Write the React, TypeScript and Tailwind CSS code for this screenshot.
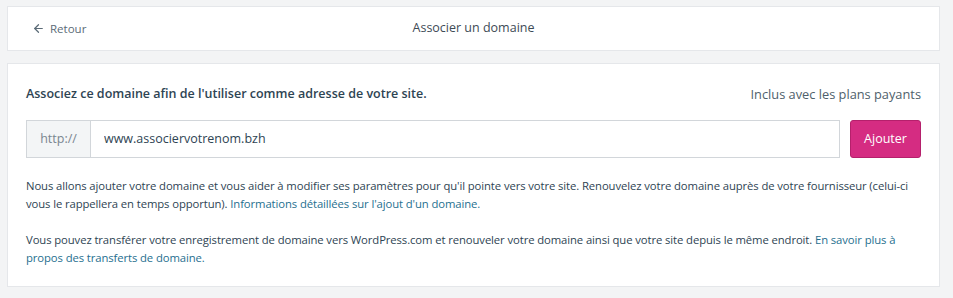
import { ArrowLeft } from "lucide-react"

export default function App() {
  return (
    <div
      className="min-h-[298px] w-[953px] bg-[#f3f4f5] px-[7px] pt-[6px] text-[#2e4453]"
      style={{ fontFamily: '"Open Sans", "Noto Sans", sans-serif' }}
    >
      {/* header card */}
      <div className="relative flex h-[45px] w-[933px] items-center border border-[#e5e7ea] bg-white">
        <button className="absolute left-[24px] flex items-center gap-[5px] text-[11.5px] text-[#5b6b77]">
          <ArrowLeft className="h-[13px] w-[13px]" strokeWidth={2.25} />
          Retour
        </button>
        <div className="w-full text-center text-[12.5px] text-[#3d4a55]">Associer un domaine</div>
      </div>

      {/* main card */}
      <div className="mt-[12px] w-[933px] border border-[#e5e7ea] bg-white px-[18px] pt-[21px] pb-[19px]">
        <div className="flex items-center justify-between">
          <h2 className="text-[12.5px] font-semibold text-[#2e4453]">
            Associez ce domaine afin de l'utiliser comme adresse de votre site.
          </h2>
          <span className="text-[12.8px] text-[#4f5f6b]">Inclus avec les plans payants</span>
        </div>

        <div className="mt-[16px] flex items-stretch gap-[10px]">
          <div className="flex h-[38px] flex-1">
            <span className="flex w-[65px] items-center justify-center border border-[#d2d6da] bg-[#f3f5f6] text-[12.5px] text-[#7a8690]">
              http://
            </span>
            <input
              className="flex-1 border border-l-0 border-[#d2d6da] px-[13px] text-[12.5px] text-[#2e4453] outline-none"
              defaultValue="www.associervotrenom.bzh"
            />
          </div>
          <button className="h-[38px] w-[71px] rounded-[3px] border border-[#b5206c] bg-[#d52c82] text-[12.5px] text-white">
            Ajouter
          </button>
        </div>

        <p className="mt-[19px] text-[11.3px] leading-[18px] tracking-[-0.1px] text-[#2e4453]">
          Nous allons ajouter votre domaine et vous aider à modifier ses paramètres pour qu'il pointe vers votre site. Renouvelez votre domaine auprès de votre fournisseur (celui-ci vous le rappellera en temps opportun).{" "}
          <a className="text-[#1f6f8f]">Informations détaillées sur l'ajout d'un domaine.</a>
        </p>

        <p className="mt-[18px] text-[11.3px] leading-[18px] tracking-[-0.1px] text-[#2e4453]">
          Vous pouvez transférer votre enregistrement de domaine vers WordPress.com et renouveler votre domaine ainsi que votre site depuis le même endroit.{" "}
          <a className="text-[#1f6f8f]">En savoir plus à propos des transferts de domaine.</a>
        </p>
      </div>
    </div>
  )
}
